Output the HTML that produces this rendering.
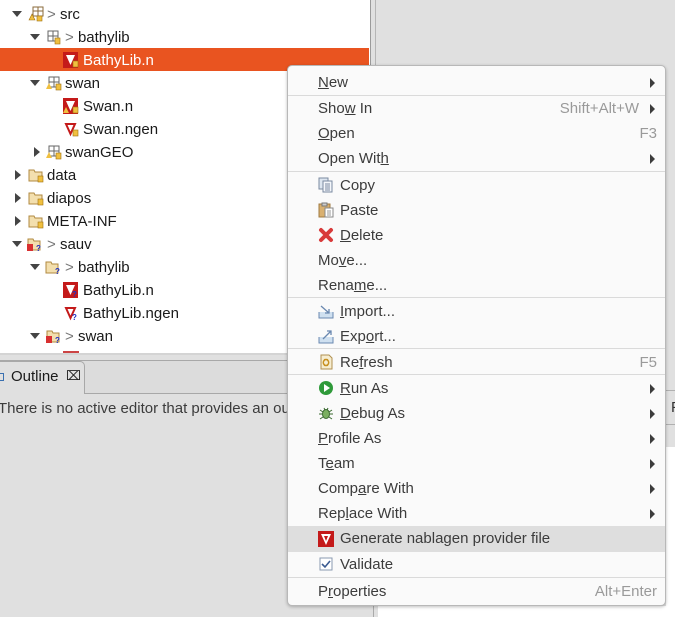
<!DOCTYPE html>
<html><head><meta charset="utf-8"><style>
*{margin:0;padding:0;box-sizing:border-box}
body{width:675px;height:617px;overflow:hidden;background:#e0e0e0;font-family:"Liberation Sans","DejaVu Sans",sans-serif;font-size:15px;color:#3c3c3c;position:relative}
.a{position:absolute;white-space:nowrap}
.tree{left:0;top:0;width:370px;height:353px;background:#fff}
.r{position:absolute;height:23px;line-height:23px;color:#1a1a1a}
.tri{position:absolute;width:0;height:0}
.down{border-left:5px solid transparent;border-right:5px solid transparent;border-top:6px solid #444}
.right{border-top:5px solid transparent;border-bottom:5px solid transparent;border-left:6px solid #444}
.ic{position:absolute;width:16px;height:16px}
.gt{color:#777}
.menu{left:287px;top:65px;width:379px;height:541px;background:#fafafa;border:1px solid #b8b8b8;border-radius:5px;box-shadow:0 1px 3px rgba(0,0,0,.25)}
.mi{position:absolute;left:0;width:377px;height:25px;line-height:25px;color:#3c3c3c}
.mi .t{position:absolute;left:30px}
.mi .ti{position:absolute;left:52px}
.mi .k{position:absolute;right:8px;color:#9a9a9a}
.mi .ar{position:absolute;right:10px;top:8px;border-top:5px solid transparent;border-bottom:5px solid transparent;border-left:5px solid #3c3c3c}
.mi .mic{position:absolute;left:30px;top:4px;width:16px;height:16px}
.sep{position:absolute;left:0;width:377px;height:1px;background:#dadada}
u{text-decoration:underline}
</style></head><body>
<div class="a tree"></div>
<div class="a" style="left:370px;top:0;width:1px;height:353px;background:#9a9a9a"></div>
<div class="a" style="left:375px;top:0;width:1px;height:353px;background:#b5b5b5"></div>
<div class="a" style="left:0;top:48px;width:369px;height:23px;background:#e95420"></div>

<div class="tri down" style="left:12px;top:11px"></div>
<svg class="ic" style="left:28px;top:6px" viewBox="0 0 16 16"><rect x="5" y="1" width="10" height="9" fill="none" stroke="#8a6a3a"/><path d="M5 5h10M10 1v9" stroke="#8a6a3a"/><path d="M1 14l3-6 3 6z" fill="#f0c040" stroke="#a07010" stroke-width=".6"/><rect x="9" y="10" width="5" height="5" fill="#f0c040" stroke="#a07010" stroke-width=".6"/></svg>
<div class="r" style="left:47px;top:3px"><span class="gt">&gt; </span>src</div>

<div class="tri down" style="left:30px;top:34px"></div>
<svg class="ic" style="left:46px;top:29px" viewBox="0 0 16 16"><rect x="2" y="2" width="10" height="10" fill="none" stroke="#666"/><path d="M2 7h10M7 2v10" stroke="#666"/><rect x="9" y="9" width="5" height="6" fill="#f0c040" stroke="#a07010" stroke-width=".6"/></svg>
<div class="r" style="left:65px;top:26px"><span class="gt">&gt; </span>bathylib</div>

<svg class="ic" style="left:63px;top:52px" viewBox="0 0 16 16"><rect x="0" y="0" width="15" height="16" fill="#c41a1a"/><path d="M3 3h9l-4.5 10z" fill="#fff"/><rect x="10" y="9" width="5" height="6" fill="#f0c040" stroke="#a07010" stroke-width=".6"/></svg>
<div class="r" style="left:83px;top:49px;color:#fff">BathyLib.n</div>

<div class="tri down" style="left:30px;top:80px"></div>
<svg class="ic" style="left:46px;top:75px" viewBox="0 0 16 16"><rect x="3" y="2" width="10" height="10" fill="none" stroke="#666"/><path d="M3 7h10M8 2v10" stroke="#666"/><path d="M0 14l3-6 3 6z" fill="#f0c040"/><rect x="10" y="9" width="5" height="6" fill="#f0c040" stroke="#a07010" stroke-width=".6"/></svg>
<div class="r" style="left:65px;top:72px">swan</div>

<svg class="ic" style="left:63px;top:98px" viewBox="0 0 16 16"><rect x="0" y="0" width="15" height="16" fill="#c41a1a"/><path d="M3 3h9l-4.5 10z" fill="#fff"/><path d="M0 15l3-6 3 6z" fill="#f0c040"/><rect x="10" y="9" width="5" height="6" fill="#f0c040" stroke="#a07010" stroke-width=".6"/></svg>
<div class="r" style="left:83px;top:95px">Swan.n</div>

<svg class="ic" style="left:63px;top:121px" viewBox="0 0 16 16"><path d="M3 3h9l-4.5 10z" fill="none" stroke="#c41a1a" stroke-width="2"/><rect x="10" y="9" width="5" height="6" fill="#f0c040" stroke="#a07010" stroke-width=".6"/></svg>
<div class="r" style="left:83px;top:118px">Swan.ngen</div>

<div class="tri right" style="left:34px;top:147px"></div>
<svg class="ic" style="left:46px;top:144px" viewBox="0 0 16 16"><rect x="3" y="2" width="10" height="10" fill="none" stroke="#666"/><path d="M3 7h10M8 2v10" stroke="#666"/><path d="M0 14l3-6 3 6z" fill="#f0c040"/><rect x="10" y="9" width="5" height="6" fill="#f0c040" stroke="#a07010" stroke-width=".6"/></svg>
<div class="r" style="left:65px;top:141px">swanGEO</div>

<div class="tri right" style="left:15px;top:170px"></div>
<svg class="ic" style="left:28px;top:167px" viewBox="0 0 16 16"><path d="M1 3h5l1 2h7v9H1z" fill="#f3dfae" stroke="#b08a40"/><rect x="10" y="9" width="5" height="6" fill="#f0c040" stroke="#a07010" stroke-width=".6"/></svg>
<div class="r" style="left:47px;top:164px">data</div>
<div class="tri right" style="left:15px;top:193px"></div>
<svg class="ic" style="left:28px;top:190px" viewBox="0 0 16 16"><path d="M1 3h5l1 2h7v9H1z" fill="#f3dfae" stroke="#b08a40"/><rect x="10" y="9" width="5" height="6" fill="#f0c040" stroke="#a07010" stroke-width=".6"/></svg>
<div class="r" style="left:47px;top:187px">diapos</div>
<div class="tri right" style="left:15px;top:216px"></div>
<svg class="ic" style="left:28px;top:213px" viewBox="0 0 16 16"><path d="M1 3h5l1 2h7v9H1z" fill="#f3dfae" stroke="#b08a40"/><rect x="10" y="9" width="5" height="6" fill="#f0c040" stroke="#a07010" stroke-width=".6"/></svg>
<div class="r" style="left:47px;top:210px">META-INF</div>

<div class="tri down" style="left:12px;top:241px"></div>
<svg class="ic" style="left:26px;top:236px" viewBox="0 0 16 16"><path d="M2 3h5l1 2h6v9H2z" fill="#f3dfae" stroke="#b08a40"/><rect x="1" y="8" width="6" height="7" fill="#d83030"/><text x="10" y="15" font-size="8" fill="#2030c0" font-weight="bold">?</text></svg>
<div class="r" style="left:47px;top:233px"><span class="gt">&gt; </span>sauv</div>

<div class="tri down" style="left:30px;top:264px"></div>
<svg class="ic" style="left:45px;top:259px" viewBox="0 0 16 16"><path d="M1 3h5l1 2h6v9H1z" fill="#f3dfae" stroke="#b08a40"/><text x="10" y="15" font-size="8" fill="#2030c0" font-weight="bold">?</text></svg>
<div class="r" style="left:65px;top:256px"><span class="gt">&gt; </span>bathylib</div>

<svg class="ic" style="left:63px;top:282px" viewBox="0 0 16 16"><rect x="0" y="0" width="15" height="16" fill="#c41a1a"/><path d="M3 3h9l-4.5 10z" fill="#fff"/><text x="9" y="15" font-size="8" fill="#2030c0" font-weight="bold">?</text></svg>
<div class="r" style="left:83px;top:279px">BathyLib.n</div>

<svg class="ic" style="left:63px;top:305px" viewBox="0 0 16 16"><path d="M3 3h9l-4.5 10z" fill="none" stroke="#c41a1a" stroke-width="2"/><text x="9" y="15" font-size="8" fill="#2030c0" font-weight="bold">?</text></svg>
<div class="r" style="left:83px;top:302px">BathyLib.ngen</div>

<div class="tri down" style="left:30px;top:333px"></div>
<svg class="ic" style="left:45px;top:328px" viewBox="0 0 16 16"><path d="M2 3h5l1 2h6v9H2z" fill="#f3dfae" stroke="#b08a40"/><rect x="1" y="8" width="6" height="7" fill="#d83030"/><text x="10" y="15" font-size="8" fill="#2030c0" font-weight="bold">?</text></svg>
<div class="r" style="left:65px;top:325px"><span class="gt">&gt; </span>swan</div>
<div class="a" style="left:63px;top:351px;width:16px;height:2px;background:#c44"></div>

<div class="a" style="left:0;top:353px;width:375px;height:2px;background:#d4d4d4"></div>
<div class="a" style="left:0;top:360px;width:290px;height:1px;background:#a8a8a8"></div>
<div class="a" style="left:0;top:361px;width:290px;height:33px;background:#dcdcdc"></div>
<div class="a" style="left:0;top:393px;width:290px;height:1px;background:#a8a8a8"></div>
<div class="a" style="left:-2px;top:361px;width:87px;height:33px;background:#e0e0e0;border:1px solid #a8a8a8;border-bottom:none;border-radius:0 5px 0 0"></div>
<div class="a" style="left:0;top:373px;width:4px;height:8px;border:1px solid #3a70b0;border-left:none"></div>
<div class="a" style="left:11px;top:368px;color:#1a1a1a">Outline</div>
<div class="a" style="left:66px;top:368px;font-size:13px;color:#222">&#x2327;</div>
<div class="a" style="left:-2px;top:400px;color:#3c3c3c">There is no active editor that provides an outline.</div>

<div class="a" style="left:666px;top:390px;width:9px;height:1px;background:#b0b0b0"></div>
<div class="a" style="left:666px;top:424px;width:9px;height:1px;background:#b0b0b0"></div>
<div class="a" style="left:666px;top:447px;width:9px;height:170px;background:#fff"></div>
<div class="a" style="left:671px;top:399px;color:#333">F</div>
<div class="a" style="left:373px;top:600px;width:1px;height:17px;background:#aaa"></div>
<div class="a" style="left:378px;top:606px;width:288px;height:11px;background:#fff"></div>

<div class="a menu">
<div class="mi" style="top:4px"><span class="t"><u>N</u>ew</span><i class="ar"></i></div>
<div class="sep" style="top:29px"></div>
<div class="mi" style="top:30px"><span class="t">Sho<u>w</u> In</span><span class="k" style="right:26px">Shift+Alt+W</span><i class="ar"></i></div>
<div class="mi" style="top:55px"><span class="t"><u>O</u>pen</span><span class="k">F3</span></div>
<div class="mi" style="top:80px"><span class="t">Open Wit<u>h</u></span><i class="ar"></i></div>
<div class="sep" style="top:105px"></div>
<div class="mi" style="top:107px"><svg class="mic" viewBox="0 0 16 16"><rect x="1" y="1" width="9" height="11" fill="#dde6f0" stroke="#7a8aa0"/><rect x="5" y="4" width="9" height="11" fill="#f4f7fb" stroke="#7a8aa0"/><path d="M7 7h5M7 9h5M7 11h5M7 13h5" stroke="#7a8aa0"/></svg><span class="ti">Copy</span></div>
<div class="mi" style="top:132px"><svg class="mic" viewBox="0 0 16 16"><rect x="1" y="2" width="11" height="13" fill="#d9b070" stroke="#a07a40"/><rect x="4" y="1" width="5" height="3" fill="#ccc" stroke="#777"/><rect x="7" y="6" width="8" height="9" fill="#fff" stroke="#888"/><path d="M9 9h4M9 11h4M9 13h4" stroke="#999"/></svg><span class="ti">Paste</span></div>
<div class="mi" style="top:157px"><svg class="mic" viewBox="0 0 16 16"><path d="M3 3l10 10M13 3L3 13" stroke="#d83a3a" stroke-width="4" stroke-linecap="round"/></svg><span class="ti"><u>D</u>elete</span></div>
<div class="mi" style="top:182px"><span class="t">Mo<u>v</u>e...</span></div>
<div class="mi" style="top:207px"><span class="t">Rena<u>m</u>e...</span></div>
<div class="sep" style="top:231px"></div>
<div class="mi" style="top:233px"><svg class="mic" viewBox="0 0 16 16"><path d="M1 9v6h14V9" fill="#cfe0f0" stroke="#6a88b0"/><path d="M3 3l8 7M11 6v4H7" fill="none" stroke="#6a88b0" stroke-width="1.3"/></svg><span class="ti"><u>I</u>mport...</span></div>
<div class="mi" style="top:258px"><svg class="mic" viewBox="0 0 16 16"><path d="M1 9v6h14V9" fill="#cfe0f0" stroke="#6a88b0"/><path d="M5 11l8-8M9 3h4v4" fill="none" stroke="#6a88b0" stroke-width="1.3"/></svg><span class="ti">Exp<u>o</u>rt...</span></div>
<div class="sep" style="top:282px"></div>
<div class="mi" style="top:284px"><svg class="mic" viewBox="0 0 16 16"><path d="M3 1h8l3 3v11H3z" fill="#f6edd0" stroke="#b09050"/><path d="M6 6a3 3 0 1 1 0 5M10 11a3 3 0 1 1 0-5" fill="none" stroke="#c89020" stroke-width="1.5"/></svg><span class="ti">Re<u>f</u>resh</span><span class="k">F5</span></div>
<div class="sep" style="top:308px"></div>
<div class="mi" style="top:310px"><svg class="mic" viewBox="0 0 16 16"><circle cx="8" cy="8" r="7" fill="#2f9a3a"/><path d="M6 4l6 4-6 4z" fill="#fff"/></svg><span class="ti"><u>R</u>un As</span><i class="ar"></i></div>
<div class="mi" style="top:335px"><svg class="mic" viewBox="0 0 16 16"><ellipse cx="8" cy="9" rx="3.5" ry="4.5" fill="#7ab060" stroke="#3a6a30"/><path d="M2 5l3 2M14 5l-3 2M1 9h3M12 9h3M2 14l3-2M14 14l-3-2M6 3l1 2M10 3L9 5" stroke="#3a6a30"/></svg><span class="ti"><u>D</u>ebug As</span><i class="ar"></i></div>
<div class="mi" style="top:360px"><span class="t"><u>P</u>rofile As</span><i class="ar"></i></div>
<div class="mi" style="top:385px"><span class="t">T<u>e</u>am</span><i class="ar"></i></div>
<div class="mi" style="top:410px"><span class="t">Comp<u>a</u>re With</span><i class="ar"></i></div>
<div class="mi" style="top:435px"><span class="t">Rep<u>l</u>ace With</span><i class="ar"></i></div>
<div class="mi" style="top:460px;height:26px;background:#dedede"><svg class="mic" style="top:5px" viewBox="0 0 16 16"><rect x="0" y="0" width="16" height="16" fill="#c41a1a"/><path d="M3 3h10l-5 11z" fill="#fff"/><path d="M6 5h4l-2 5z" fill="#c41a1a"/></svg><span class="ti">Generate nablagen provider file</span></div>
<div class="mi" style="top:486px"><svg class="mic" viewBox="0 0 16 16"><rect x="2" y="2" width="12" height="12" fill="#fff" stroke="#8a9ab0"/><path d="M4 8l3 3 5-6" fill="none" stroke="#3a5a90" stroke-width="1.6"/></svg><span class="ti">Validate</span></div>
<div class="sep" style="top:511px"></div>
<div class="mi" style="top:513px"><span class="t">P<u>r</u>operties</span><span class="k">Alt+Enter</span></div>
</div>
</body></html>
